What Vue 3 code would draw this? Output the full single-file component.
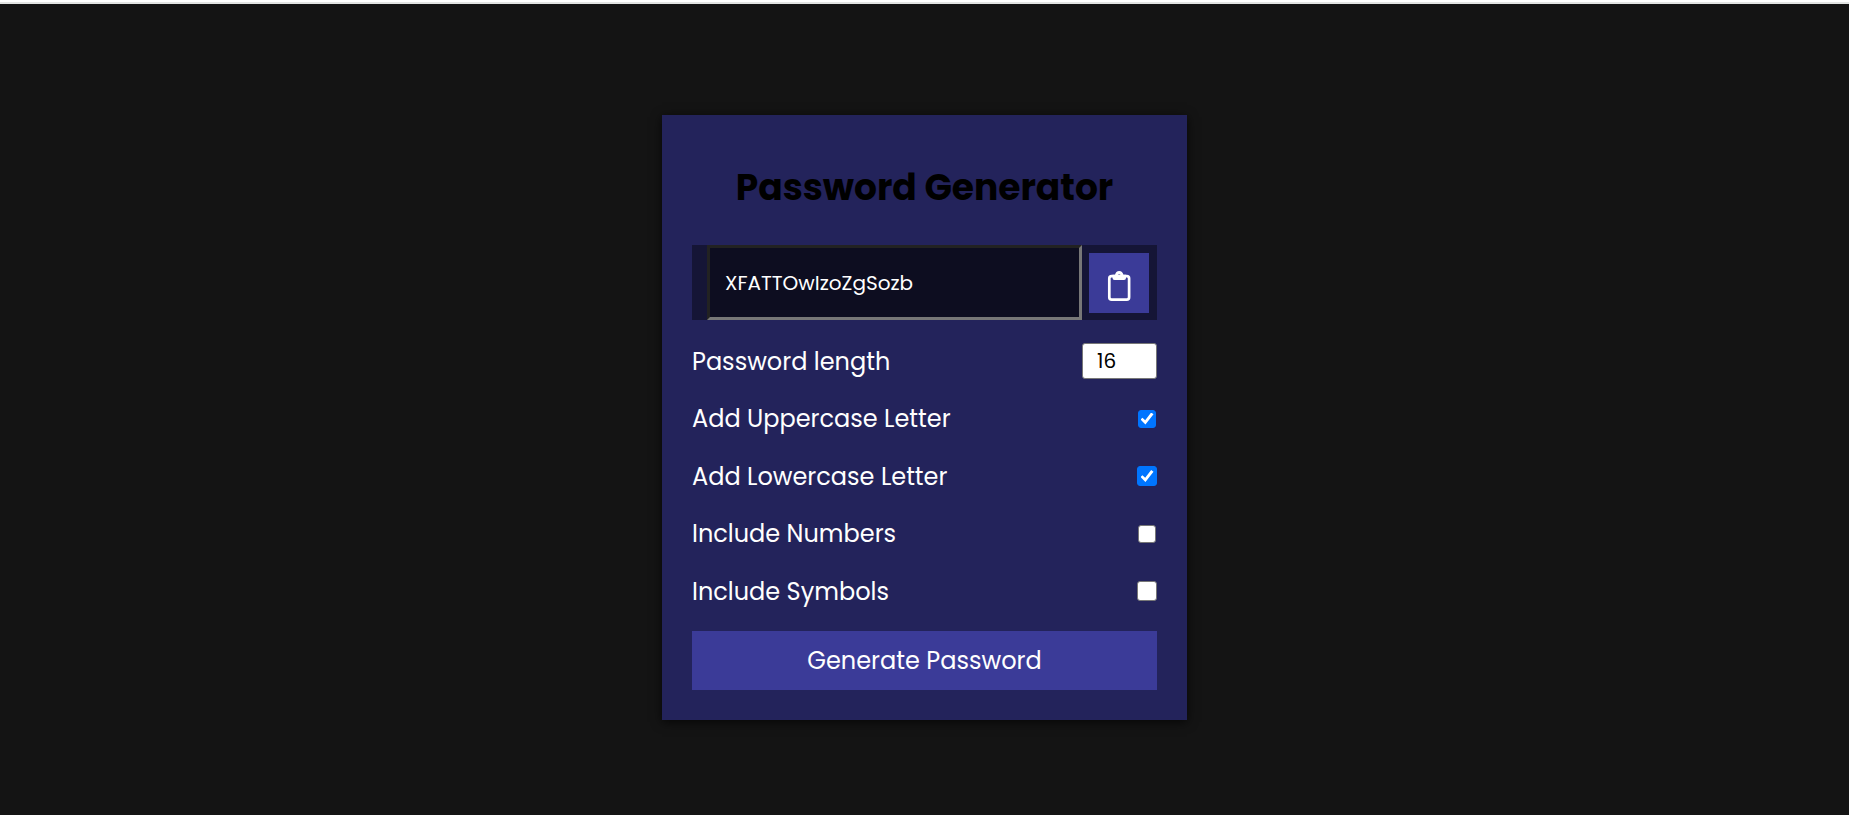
<script setup>
import { ref, reactive } from 'vue'

const password = ref('XFATTOwIzoZgSozb')
const length = ref(16)
const options = reactive([
  { id: 'uppercase', label: 'Add Uppercase Letter', checked: true, large: false, chars: 'ABCDEFGHIJKLMNOPQRSTUVWXYZ' },
  { id: 'lowercase', label: 'Add Lowercase Letter', checked: true, large: true, chars: 'abcdefghijklmnopqrstuvwxyz' },
  { id: 'numbers', label: 'Include Numbers', checked: false, large: false, chars: '0123456789' },
  { id: 'symbols', label: 'Include Symbols', checked: false, large: true, chars: '!@#$%^&*()_+-=' }
])

function generate() {
  const pool = options.filter((o) => o.checked).map((o) => o.chars).join('')
  let result = ''
  for (let i = 0; pool && i < length.value; i++) {
    result += pool[Math.floor(Math.random() * pool.length)]
  }
  password.value = result
}

function copy() {
  navigator.clipboard?.writeText(password.value)
}
</script>

<template>
  <main class="page">
    <form class="card" @submit.prevent="generate">
      <h1 class="title">Password Generator</h1>
      <div class="output">
        <input v-model="password" class="password" type="text" aria-label="Generated password" spellcheck="false" />
        <button class="copy" type="button" aria-label="Copy password" @click="copy">
          <svg width="24" height="32" viewBox="0 0 24 32" fill="none" stroke="#fff" stroke-width="2.7">
            <rect x="2.3" y="6.1" width="19.8" height="23.6" rx="2.4" />
            <path fill="#fff" stroke="none" fill-rule="evenodd" d="M5.500 4.800H8Q8.800 1 12.200 1t4.200 3.800H19V8Q19 10 17 10H7.500Q5.500 10 5.500 8zM12.200 4.300a1.300 1.300 0 1 0 0 2.600a1.300 1.300 0 1 0 0-2.600z" />
          </svg>
        </button>
      </div>
      <div class="row large">
        <label for="length">Password length</label>
        <input id="length" v-model="length" class="length" type="number" min="1" max="40" />
      </div>
      <div v-for="option in options" :key="option.id" class="row" :class="{ large: option.large }">
        <label :for="option.id">{{ option.label }}</label>
        <input :id="option.id" v-model="option.checked" class="check" type="checkbox" />
      </div>
      <button class="generate" type="submit">Generate Password</button>
    </form>
  </main>
</template>

<style>
body {
  margin: 0;
  background: #141414;
}
</style>

<style scoped>
.page {
  box-sizing: border-box;
  min-height: 100vh;
  display: flex;
  align-items: center;
  justify-content: center;
  padding-top: 18px;
  border-top: 2px solid #fff;
  box-shadow: inset 0 2px #e2e4e3;
  background: #141414;
  color: #fff;
  font-family: Poppins, Inter, sans-serif;
  font-size: 24px;
}
.card {
  box-sizing: border-box;
  width: 525px;
  max-width: 100%;
  padding: 30px;
  background: #23235b;
  box-shadow: 0 2px 10px rgba(0, 0, 0, 0.7);
}
.title {
  margin: 16px 0 30px;
  color: #000;
  font-size: 36px;
  font-weight: 700;
  line-height: 54px;
  text-align: center;
}
.output {
  display: flex;
  align-items: center;
  gap: 7px;
  height: 75px;
  padding: 0 8px 0 15px;
  margin-bottom: 12px;
  background: rgba(0, 0, 0, 0.4);
}
.password {
  box-sizing: border-box;
  flex: 1;
  min-width: 0;
  height: 100%;
  padding: 0 15px;
  border: 3px solid;
  border-color: #222 #777 #777 #222;
  outline: none;
  background: #0d0d20;
  color: #fff;
  font: inherit;
  font-size: 20px;
}
.copy {
  display: flex;
  align-items: center;
  justify-content: center;
  width: 60px;
  height: 60px;
  padding: 6px 0 0;
  border: 0;
  background: #3b3b98;
  cursor: pointer;
}
.row {
  display: flex;
  align-items: center;
  justify-content: space-between;
  height: 57px;
}
.row.large {
  height: 58px;
}
.length {
  box-sizing: border-box;
  width: 75px;
  height: 36px;
  padding: 0 14px;
  border: 1px solid #777;
  border-radius: 3px;
  background: #fff;
  color: #000;
  font: inherit;
  font-size: 20px;
}
.check {
  appearance: none;
  display: grid;
  width: 18px;
  height: 18px;
  margin: 0 1px;
  border: 1px solid #777;
  border-radius: 3px;
  background: #fff;
  box-sizing: border-box;
}
.large .check {
  width: 20px;
  height: 20px;
  margin: 0;
}
.check:checked {
  border-color: #0075ff;
  background: #0075ff;
}
.check:checked::after {
  content: '';
  width: 13px;
  height: 12px;
  place-self: center;
  background: #fff;
  clip-path: polygon(0 58%, 15% 43%, 36% 65%, 82% 0, 100% 15%, 38% 100%);
}
.generate {
  display: block;
  width: 100%;
  height: 59px;
  margin-top: 11px;
  padding: 0;
  border: 0;
  background: #3b3b98;
  color: #fff;
  font: inherit;
  cursor: pointer;
}
</style>
